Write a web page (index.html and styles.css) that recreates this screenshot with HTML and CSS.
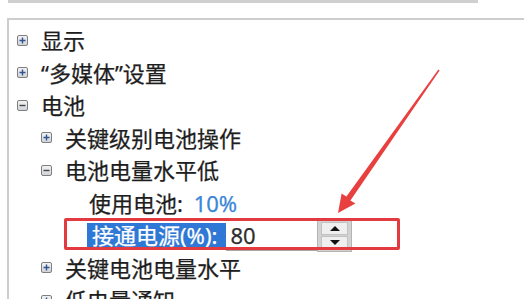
FILE: index.html
```html
<!DOCTYPE html>
<html lang="zh-CN">
<head>
<meta charset="utf-8">
<link rel="stylesheet" href="styles.css">
</head>
<body>
<svg class="defs" width="0" height="0">
  <defs>
    <linearGradient id="tg" x1="0" y1="0" x2="0" y2="1">
      <stop offset="0" stop-color="#f4f4f4"/>
      <stop offset="1" stop-color="#cfd2d8"/>
    </linearGradient>
  </defs>
</svg>
<div class="prev"></div>
<div class="panel">
  <div class="row l0">
    <svg class="tw" viewBox="0 0 11 11"><rect x="0.5" y="0.5" width="10" height="10" rx="1.5" class="box"/><path d="M2.5 5.5H8.5M5.5 2.5V8.5" class="plus"/></svg>
    <span class="label">显示</span>
  </div>
  <div class="row l0">
    <svg class="tw" viewBox="0 0 11 11"><rect x="0.5" y="0.5" width="10" height="10" rx="1.5" class="box"/><path d="M2.5 5.5H8.5M5.5 2.5V8.5" class="plus"/></svg>
    <span class="label">“多媒体”设置</span>
  </div>
  <div class="row l0">
    <svg class="tw" viewBox="0 0 11 11"><rect x="0.5" y="0.5" width="10" height="10" rx="1.5" class="box"/><path d="M2.5 5.5H8.5" class="minus"/></svg>
    <span class="label">电池</span>
  </div>
  <div class="row l1">
    <svg class="tw" viewBox="0 0 11 11"><rect x="0.5" y="0.5" width="10" height="10" rx="1.5" class="box"/><path d="M2.5 5.5H8.5M5.5 2.5V8.5" class="plus"/></svg>
    <span class="label">关键级别电池操作</span>
  </div>
  <div class="row l1">
    <svg class="tw" viewBox="0 0 11 11"><rect x="0.5" y="0.5" width="10" height="10" rx="1.5" class="box"/><path d="M2.5 5.5H8.5" class="minus"/></svg>
    <span class="label">电池电量水平低</span>
  </div>
  <div class="row l2">
    <span class="label">使用电池: <span class="val">10%</span></span>
  </div>
  <div class="row edit">
    <span class="sel">接通电源(%):</span>
    <div class="input">80</div>
    <div class="spin">
      <div class="btn"><span class="tri-up"></span></div>
      <div class="btn"><span class="tri-down"></span></div>
    </div>
  </div>
  <div class="row l1">
    <svg class="tw" viewBox="0 0 11 11"><rect x="0.5" y="0.5" width="10" height="10" rx="1.5" class="box"/><path d="M2.5 5.5H8.5M5.5 2.5V8.5" class="plus"/></svg>
    <span class="label">关键电池电量水平</span>
  </div>
  <div class="row l1">
    <svg class="tw" viewBox="0 0 11 11"><rect x="0.5" y="0.5" width="10" height="10" rx="1.5" class="box"/><path d="M2.5 5.5H8.5M5.5 2.5V8.5" class="plus"/></svg>
    <span class="label">低电量通知</span>
  </div>
</div>
<div class="callout"></div>
<svg class="arrow" viewBox="0 0 524 299" width="524" height="299">
  <polygon points="439.6,70.4 438.4,69.6 346.4,196.4 341.6,193.4 338,213 355.4,203.6 350.4,200.4" fill="#e8403f"/>
</svg>
</body>
</html>
```

FILE: styles.css
```css
html, body {
  margin: 0;
  padding: 0;
  background: #ffffff;
  overflow: hidden;
}
body {
  width: 524px;
  height: 299px;
  position: relative;
  font-family: "Noto Sans", "Noto Sans CJK SC", sans-serif;
  font-size: 22px;
  color: #1e1e1e;
  -webkit-text-stroke: 0.25px currentColor;
}
.defs {
  position: absolute;
  width: 0;
  height: 0;
}
.prev {
  margin-left: 8px;
  width: 470px;
  height: 3px;
  background: #cfcfcf;
}
.panel {
  margin-top: 15px;
  margin-left: 7px;
  width: 600px;
  height: 400px;
  border-top: 2px solid #cdcdcd;
  border-left: 2px solid #cdcdcd;
  padding-top: 4px;
}
.row {
  display: flex;
  align-items: center;
  height: 32.5px;
  white-space: nowrap;
}
.l0 { padding-left: 8px; }
.l1 { padding-left: 32px; }
.l2 { padding-left: 80px; }
.tw {
  width: 11px;
  height: 11px;
  flex: none;
  margin-right: 13px;
}
.box {
  fill: url(#tg);
  stroke: #7f7f7f;
  stroke-width: 1;
}
.plus {
  stroke: #2f5490;
  stroke-width: 1.4;
  fill: none;
}
.minus {
  stroke: #444444;
  stroke-width: 1.4;
  fill: none;
}
.label {
  line-height: 1;
}
.val {
  color: #3b86d6;
  margin-left: 5px;
}
.edit {
  padding-left: 78px;
}
.sel {
  background: #3078d5;
  color: #ffffff;
  height: 25px;
  line-height: 25px;
  padding: 0 9px 0 5px;
}
.input {
  width: 91px;
  height: 31px;
  box-sizing: border-box;
  border-top: 1px solid #c8c8c8;
  border-bottom: 1px solid #a8a8a8;
  padding-left: 4px;
  line-height: 29px;
  color: #2e2e2e;
  background: #ffffff;
}
.spin {
  width: 35px;
  height: 33px;
  box-sizing: border-box;
  background: #d2d2d2;
  border: 1px solid #b4b4b4;
  padding: 2px 3px;
  display: flex;
  flex-direction: column;
  gap: 1px;
}
.btn {
  flex: 1;
  background: #efefef;
  border: 1px solid #c2c2c2;
  display: flex;
  align-items: center;
  justify-content: center;
}
.tri-up {
  width: 0;
  height: 0;
  border-left: 5px solid transparent;
  border-right: 5px solid transparent;
  border-bottom: 5px solid #111111;
}
.tri-down {
  width: 0;
  height: 0;
  border-left: 5px solid transparent;
  border-right: 5px solid transparent;
  border-top: 5px solid #111111;
}
.callout {
  position: absolute;
  left: 64px;
  top: 218px;
  width: 336px;
  height: 32px;
  box-sizing: border-box;
  border: 3px solid #e23a3f;
  border-radius: 2px;
}
.arrow {
  position: absolute;
  left: 0;
  top: 0;
  pointer-events: none;
}
```
